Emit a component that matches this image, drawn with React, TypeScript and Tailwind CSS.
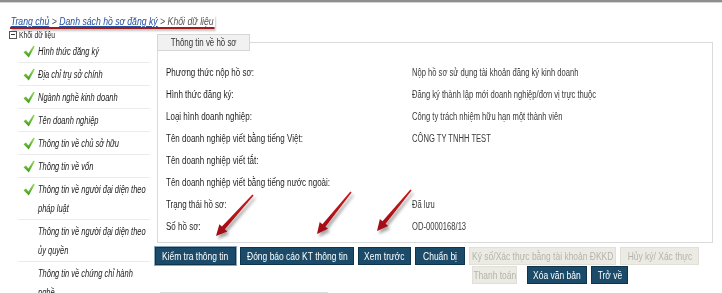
import React from 'react';

const treeItems = [
  { lines: ['Hình thức đăng ký'], done: true },
  { lines: ['Địa chỉ trụ sở chính'], done: true },
  { lines: ['Ngành nghề kinh doanh'], done: true },
  { lines: ['Tên doanh nghiệp'], done: true },
  { lines: ['Thông tin về chủ sở hữu'], done: true },
  { lines: ['Thông tin về vốn'], done: true },
  { lines: ['Thông tin về người đại diện theo', 'pháp luật'], done: true },
  { lines: ['Thông tin về người đại diện theo', 'ủy quyền'], done: false },
  { lines: ['Thông tin về chứng chỉ hành', 'nghề'], done: false },
];

const fields: [string, string][] = [
  ['Phương thức nộp hồ sơ:', 'Nộp hồ sơ sử dụng tài khoản đăng ký kinh doanh'],
  ['Hình thức đăng ký:', 'Đăng ký thành lập mới doanh nghiệp/đơn vị trực thuộc'],
  ['Loại hình doanh nghiệp:', 'Công ty trách nhiệm hữu hạn một thành viên'],
  ['Tên doanh nghiệp viết bằng tiếng Việt:', 'CÔNG TY TNHH TEST'],
  ['Tên doanh nghiệp viết tắt:', ''],
  ['Tên doanh nghiệp viết bằng tiếng nước ngoài:', ''],
  ['Trạng thái hồ sơ:', 'Đã lưu'],
  ['Số hồ sơ:', 'OD-0000168/13'],
];

// red callout arrows: tail -> tip
const arrows = [
  [253, 195, 216, 236],
  [351, 192, 317, 234],
  [411, 190, 377, 231],
];

const arrowPoints = (x1: number, y1: number, x2: number, y2: number) => {
  const len = Math.hypot(x2 - x1, y2 - y1);
  const dx = (x2 - x1) / len;
  const dy = (y2 - y1) / len;
  const nx = -dy;
  const ny = dx;
  const head = 11;
  const bx = x2 - dx * head;
  const by = y2 - dy * head;
  const pts = [
    [x1 + nx * 0.8, y1 + ny * 0.8],
    [bx + nx * 2, by + ny * 2],
    [bx + nx * 5.4, by + ny * 5.4],
    [x2, y2],
    [bx - nx * 5.4, by - ny * 5.4],
    [bx - nx * 2, by - ny * 2],
    [x1 - nx * 0.8, y1 - ny * 0.8],
  ];
  return pts.map((p) => p.map((v) => v.toFixed(1)).join(',')).join(' ');
};

const Check = () => (
  <svg width="12" height="13" viewBox="0 0 12 13" className="shrink-0 mt-[3px]">
    <defs>
      <linearGradient id="chk" x1="0" y1="0" x2="0" y2="1">
        <stop offset="0" stopColor="#9be05a" />
        <stop offset="1" stopColor="#3c9a1c" />
      </linearGradient>
    </defs>
    <path d="M0.5 7.2 L3 5.6 L5.4 8.6 L10.4 0.6 L11.8 1.6 L5.8 12.4 Z" fill="url(#chk)" />
  </svg>
);

const Btn = ({ label, w, disabled = false, focused = false, className = '' }: { label: string; w: string; disabled?: boolean; focused?: boolean; className?: string }) => (
  <div
    className={`${w} ${className} h-[18px] flex items-center justify-center text-[11px] leading-none border ${
      disabled
        ? 'bg-[#ebebe3] border-[#e0e0d8] text-[#b4b4ac]'
        : 'bg-[#1b4b68] border-[#0f354d] text-white'
    } ${focused ? 'outline outline-1 outline-[#8fa8ba]' : ''}`}
  >
    <span className="inline-block whitespace-nowrap scale-x-[0.77]">{label}</span>
  </div>
);

export default function App() {
  return (
    <div className="relative w-[722px] h-[293px] overflow-hidden bg-white font-['Liberation_Sans',Arial,sans-serif] text-[#333]">
      <div className="h-[2px] bg-[#8e8e8e]" />
      <div className="h-px bg-[#d4d4d4]" />

      {/* breadcrumb */}
      <div className="h-[24px] pt-[5px] pl-[10px]">
        <div className="inline-block origin-left scale-x-[0.79] whitespace-nowrap italic text-[11px] leading-[12px] pl-px pr-px border-b-2 border-[#a31a1a] shadow-[2px_2px_2px_rgba(0,0,0,0.25)]">
          <span className="text-[#2452a0] underline">Trang chủ</span>
          <span className="text-[#555]"> &gt; </span>
          <span className="text-[#2452a0] underline">Danh sách hồ sơ đăng ký</span>
          <span className="text-[#555]"> &gt; Khối dữ liệu</span>
        </div>
      </div>

      <div className="flex">
        {/* tree */}
        <div className="w-[157px] shrink-0 pl-[9px]">
          <div className="h-[12px] flex items-center gap-[2px] pt-[3px]">
            <div className="w-[8px] h-[8px] border border-[#555] flex items-center justify-center bg-white">
              <div className="w-[4px] h-px bg-[#333]" />
            </div>
            <span className="inline-block origin-left scale-x-[0.75] whitespace-nowrap text-[9px] leading-[10px] text-[#222]">Khối dữ liệu</span>
          </div>
          <div className="ml-[9px] mt-px w-[132px]">
            {treeItems.map((item, i) => (
              <div key={i} className="flex gap-[3px] pl-[5px] pt-[2px] pb-[1px] border-b border-[#ececec]">
                <div className="w-[12px] shrink-0">{item.done && <Check />}</div>
                <div className="origin-left scale-x-[0.75] italic text-[10px] leading-[19px] text-[#1a1a1a] whitespace-nowrap">
                  {item.lines.map((l, j) => (
                    <div key={j}>{l}</div>
                  ))}
                </div>
              </div>
            ))}
          </div>
        </div>

        {/* content */}
        <div className="flex-1">
          <div className="mt-[15px] w-[556px] border border-[#dadada] pb-[5px]">
            <div className="-mt-[9px] -ml-px w-[93px] h-[17px] border border-[#d6d6d6] bg-[#f1f1f1] flex items-center justify-center text-[10px] text-[#333]">
              <span className="inline-block whitespace-nowrap scale-x-[0.79]">Thông tin về hồ sơ</span>
            </div>
            <div className="mt-[10px]">
              {fields.map(([label, value], i) => (
                <div key={i} className="h-[22px] flex items-center pl-[8px] text-[10px]">
                  <div className="w-[246px] shrink-0 text-[#1f1f1f]">
                    <span className="inline-block origin-left scale-x-[0.8] whitespace-nowrap">{label}</span>
                  </div>
                  <div className="text-[#3a3a3a]">
                    <span className="inline-block origin-left scale-x-[0.76] whitespace-nowrap">{value}</span>
                  </div>
                </div>
              ))}
            </div>
          </div>

          {/* actions */}
          <div className="-ml-[2px] mt-[4px] flex gap-[4px]">
            <Btn label="Kiểm tra thông tin" w="w-[81px]" focused />
            <Btn label="Đóng báo cáo KT thông tin" w="w-[114px]" />
            <Btn label="Xem trước" w="w-[53px]" />
            <Btn label="Chuẩn bị" w="w-[50px]" />
            <Btn label="Ký số/Xác thực bằng tài khoản ĐKKD" w="w-[147px]" disabled />
            <Btn label="Hủy ký/ Xác thực" w="w-[79px]" disabled />
          </div>
          <div className="ml-[315px] mt-px flex gap-[4px]">
            <Btn label="Thanh toán" w="w-[45px]" disabled />
            <Btn label="Xóa văn bản" w="w-[60px]" className="ml-[6px]" />
            <Btn label="Trở về" w="w-[37px]" />
          </div>

          {/* next section, cut off by the window */}
          <div className="mt-[8px] ml-[3px] w-[168px] h-[12px] border border-[#dcdcdc]" />
        </div>
      </div>

      {/* callout arrows */}
      <svg className="absolute inset-0 pointer-events-none" width="722" height="293">
        <defs>
          <linearGradient id="arr" x1="0" y1="0" x2="0" y2="1">
            <stop offset="0" stopColor="#c8181e" />
            <stop offset="1" stopColor="#a00d12" />
          </linearGradient>
          <filter id="sh" x="-50%" y="-50%" width="200%" height="200%">
            <feDropShadow dx="2" dy="3" stdDeviation="1.5" floodColor="#000" floodOpacity="0.35" />
          </filter>
        </defs>
        {arrows.map(([x1, y1, x2, y2], i) => (
          <polygon key={i} points={arrowPoints(x1, y1, x2, y2)} fill="url(#arr)" filter="url(#sh)" />
        ))}
      </svg>
    </div>
  );
}
